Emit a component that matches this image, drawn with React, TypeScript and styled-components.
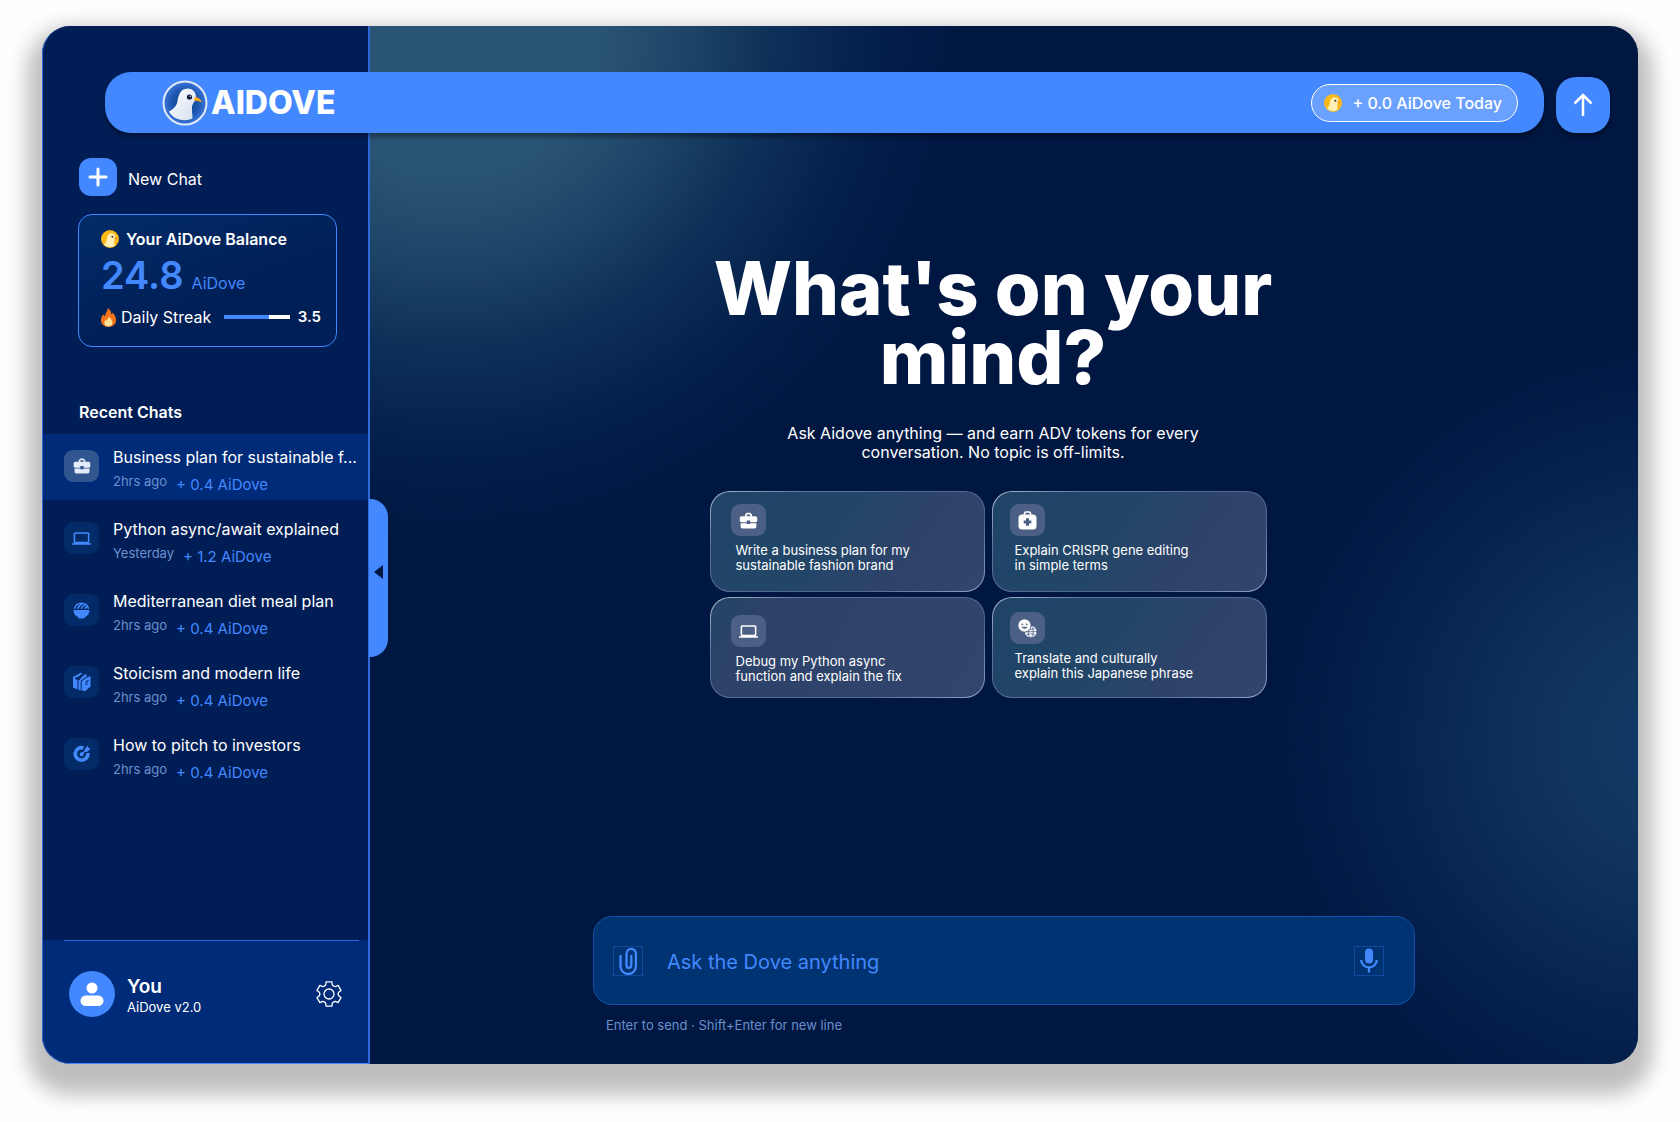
import React from "react";
import styled, { createGlobalStyle, css } from "styled-components";
import { MdBusinessCenter, MdComputer } from "react-icons/md";

const blue = "#4388ff";

const GlobalStyle = createGlobalStyle`
  *, *::before, *::after { box-sizing: border-box; }
  body {
    margin: 0;
    background: #fefefe;
    color: #fff;
    font-family: Inter, "Liberation Sans", sans-serif;
    font-size: 16px;
  }
  h1, h2, p, ul { margin: 0; padding: 0; }
  ul { list-style: none; }
  button, input { font: inherit; color: inherit; }
  button { border: 0; padding: 0; background: none; cursor: pointer; text-align: left; }
  svg { display: block; flex: none; }
`;

/* ---------- Shell ---------- */

const Shell = styled.div`
  display: grid;
  grid-template-columns: 328px minmax(0, 1fr);
  grid-template-rows: auto 1fr;
  min-height: calc(100vh - 84px);
  margin: 26px 42px 58px;
  border-radius: 28px;
  background: #001742;
  box-shadow: 0 16px 20px 15px rgba(0, 0, 0, 0.25);
`;

const TopArea = styled.header`
  grid-area: 1 / 1 / 2 / -1;
  z-index: 2;
  display: flex;
  align-items: flex-end;
  gap: 12px;
  padding: 46px 28px 0 63px;
`;

const TopBar = styled.div`
  flex: 1;
  display: flex;
  align-items: center;
  justify-content: space-between;
  height: 61px;
  padding: 0 26px 0 57px;
  border-radius: 26px;
  background: ${blue};
  box-shadow: 0 4px 4px rgba(0, 0, 0, 0.35);
`;

const Brand = styled.a`
  display: flex;
  align-items: center;
  gap: 3px;
  color: #fff;
  text-decoration: none;
  font-size: 32px;
  font-weight: 800;
  line-height: 44px;
`;

const TodayPill = styled.div`
  display: flex;
  align-items: center;
  gap: 10px;
  height: 38px;
  padding: 0 15px 0 12px;
  border: 1px solid #fff;
  border-radius: 19px;
  background: #6aa1ff;
  font-size: 16px;
  font-weight: 500;
`;

const ScrollTop = styled.button`
  display: grid;
  place-items: center;
  width: 54px;
  height: 56px;
  border-radius: 20px;
  background: ${blue};
  box-shadow: 0 4px 4px rgba(0, 0, 0, 0.35);
`;

/* ---------- Sidebar ---------- */

const Sidebar = styled.aside`
  grid-area: 1 / 1 / -1 / 2;
  position: relative;
  display: flex;
  flex-direction: column;
  padding-top: 132px;
  border: solid ${blue};
  border-width: 0 2px 1px 1px;
  border-color: transparent #2f68d8 ${blue} #2f68d8;
  border-radius: 28px 0 0 28px;
  background: #001e55;
`;

const NewChat = styled.button`
  display: flex;
  align-items: center;
  gap: 11px;
  margin: 0 36px 18px;
  font-size: 16px;
`;

const PlusTile = styled.span`
  display: grid;
  place-items: center;
  width: 38px;
  height: 38px;
  border-radius: 12px;
  background: ${blue};
`;

const NewChatLabel = styled.span`
  padding-top: 3px;
`;

const Balance = styled.section`
  display: flex;
  flex-direction: column;
  height: 133px;
  margin: 0 31px 0 35px;
  padding: 13px 15px 0 22px;
  border: 1px solid ${blue};
  border-radius: 14px;
  background: linear-gradient(160deg, #032c68 0%, #03296200 60%), #001f56;
`;

const BalanceTitle = styled.h2`
  display: flex;
  align-items: center;
  gap: 7px;
  font-size: 16px;
  font-weight: 600;
  line-height: 22px;
`;

const Amount = styled.p`
  display: flex;
  align-items: baseline;
  gap: 8px;
  height: 52px;
  color: ${blue};
  font-size: 16px;
  line-height: 50px;

  strong {
    font-size: 38px;
    font-weight: 600;
  }
`;

const Streak = styled.div`
  display: flex;
  align-items: center;
  gap: 5px;
  font-size: 16px;
  line-height: 30px;

  strong { font-size: 15px; font-weight: 600; }
`;

const Track = styled.span`
  flex: 1;
  height: 4px;
  margin: 0 3px 0 8px;
  background: #fff;
`;

const Fill = styled.span`
  display: block;
  height: 100%;
  background: ${blue};
`;

const ListTitle = styled.h2`
  margin: 54px 36px 11px;
  font-size: 16px;
  font-weight: 600;
  line-height: 22px;
`;

const ChatList = styled.ul`
  display: flex;
  flex-direction: column;
  gap: 6px;
`;

const ChatRow = styled.button<{ $active?: boolean }>`
  display: flex;
  gap: 14px;
  width: 100%;
  height: 66px;
  padding: 12px 4px 0 21px;
  background: ${(p) => (p.$active ? "#002b78" : "transparent")};
`;

const Tile = styled.span<{ $tone?: "muted" | "active" | "glass" }>`
  display: grid;
  place-items: center;
  flex: none;
  width: 35px;
  height: 32px;
  border-radius: 9px;
  background: #032b68;
  color: ${blue};
  ${(p) => p.$tone === "active" && css`background: #31558e; color: #e4ecfb;`}
  ${(p) => p.$tone === "glass" && css`background: #4c5f85; color: #fff;`}
`;

const RowTile = styled(Tile)`
  margin-top: 4px;
`;

const ChatText = styled.span`
  display: block;
  min-width: 0;
`;

const ChatTitle = styled.span`
  display: block;
  font-size: 16px;
  line-height: 22px;
  white-space: nowrap;
`;

const ChatMeta = styled.span`
  display: flex;
  gap: 9px;
  padding-top: 4px;
  color: #6c8fd0;
  font-size: 13px;
  line-height: 18px;
`;

const Earned = styled.span`
  padding-top: 2px;
  color: ${blue};
  font-size: 15px;
  line-height: 22px;
`;

const Account = styled.footer`
  display: flex;
  align-items: center;
  gap: 12px;
  height: 123px;
  margin-top: auto;
  padding: 0 26px 15px 26px;
  border-radius: 0 0 0 27px;
  background:
    linear-gradient(#2f68d8, #2f68d8) 21px 0 / calc(100% - 30px) 1px no-repeat,
    #002b78;
`;

const Avatar = styled.span`
  display: grid;
  place-items: center;
  width: 46px;
  height: 46px;
  border-radius: 50%;
  background: ${blue};
`;

const AccountName = styled.p`
  flex: 1;
  padding-top: 4px;
  font-size: 13px;
  line-height: 18px;

  strong {
    display: block;
    font-size: 19px;
    font-weight: 600;
    line-height: 22px;
  }
`;

const CollapseHandle = styled.button`
  position: absolute;
  top: 473px;
  right: -20px;
  display: grid;
  place-items: center;
  width: 19px;
  height: 158px;
  padding-bottom: 12px;
  border-radius: 0 18px 18px 0;
  background: ${blue};
`;

/* ---------- Main ---------- */

const Main = styled.main`
  grid-area: 1 / 2 / -1 / -1;
  display: flex;
  flex-direction: column;
  align-items: center;
  padding: 228px 24px 30px;
  border-radius: 0 28px 28px 0;
  background:
    radial-gradient(circle 520px at 80px 0, #2b5575 0%, #2a5474 28%, #1f4668 44%, #0e3058 62%, #04204b 80%, #00174200 100%),
    radial-gradient(circle 410px at 103% 69%, #133b68 0%, #10345f 30%, #06244f 66%, #00174200 100%);
`;

const Hero = styled.section`
  display: flex;
  flex-direction: column;
  align-items: center;
  padding-right: 22px;
  text-align: center;
`;

const Headline = styled.h1`
  max-width: 620px;
  font-size: 74px;
  font-weight: 800;
  line-height: 69px;
`;

const Lead = styled.p`
  max-width: 440px;
  margin-top: 32px;
  font-size: 16px;
  line-height: 19px;
`;

const Suggestions = styled.div`
  display: grid;
  grid-template-columns: repeat(2, 275px);
  gap: 5px 7px;
  margin: 29px 10px 40px 0;
`;

const SuggestionCard = styled.button<{ $top: number; $left: number; $plain?: boolean }>`
  display: flex;
  flex-direction: column;
  gap: 7px;
  height: 101px;
  padding: ${(p) => p.$top}px 20px 0 ${(p) => p.$left}px;
  border: 1px solid transparent;
  border-radius: 20px;
  background:
    ${(p) =>
      p.$plain
        ? "linear-gradient(120deg, #234468 0%, #2d4268 18%, #32466d 100%)"
        : "linear-gradient(125deg, #1f4467 0%, #234668 45%, #2e436a 68%, #32466d 100%)"} padding-box,
    linear-gradient(150deg, #aebbd2 0%, #5b6f96 22%, #50658f 72%, #93a3c3 100%) border-box;
  font-size: 13px;
  line-height: 15px;
`;

const CardText = styled.span`
  max-width: 200px;
  padding-left: 5px;
`;

const Composer = styled.form`
  width: 100%;
  max-width: 822px;
  margin-top: auto;
`;

const PromptBox = styled.div`
  display: flex;
  align-items: center;
  gap: 24px;
  height: 89px;
  padding: 0 30px 0 19px;
  border: 1px solid #1450aa;
  border-radius: 19px;
  background: #003371;
`;

const ToolButton = styled.button`
  display: grid;
  place-items: center;
  flex: none;
  width: 30px;
  height: 30px;
  border: 1px solid #12499d;
  color: ${blue};
`;

const PromptInput = styled.input`
  flex: 1;
  min-width: 0;
  padding: 2px 0 0;
  border: 0;
  outline: 0;
  background: none;
  font-size: 20px;
  line-height: 28px;

  &::placeholder { color: ${blue}; opacity: 1; }
`;

const Hint = styled.p`
  margin: 11px 0 0 13px;
  color: #6c8fcb;
  font-size: 13px;
  line-height: 18px;
`;

/* ---------- Drawings ---------- */

const DoveLogo = () => (
  <svg width="46" height="46" viewBox="0 0 46 46" aria-hidden="true">
    <defs>
      <radialGradient id="dove-sky" cx="50%" cy="50%" r="50%">
        <stop offset="0" stopColor="#0d4390" />
        <stop offset="0.6" stopColor="#1c55ab" />
        <stop offset="1" stopColor="#3a75dc" />
      </radialGradient>
      <linearGradient id="dove-body" x1="0" y1="0" x2="1" y2="1">
        <stop offset="0" stopColor="#ffffff" />
        <stop offset="1" stopColor="#d3dfef" />
      </linearGradient>
    </defs>
    <circle cx="23" cy="23" r="21.5" fill="url(#dove-sky)" stroke="#e3e9f5" strokeWidth="2" />
    <path
      d="M7 31.500c2.500-1.500 6.500-4 8-8C16.200 18 17 8.500 25.500 8.500c5 0 8.200 3.200 8.500 8 .2 4-3.500 6.500-4 10.500-.4 4 .6 8 .5 11.500-5 2.300-11 2.200-16 0C11 37 8.500 34.500 7 31.500z"
      fill="url(#dove-body)"
    />
    <path d="M32.800 16.500c3 .5 5.700 2.500 7.200 5.700-2.700-1-5-1.300-7.800-1.200z" fill="#f5a31a" />
    <circle cx="27.500" cy="17" r="2.600" fill="#0b1a3c" />
    <circle cx="28.300" cy="16.200" r="0.700" fill="#fff" />
  </svg>
);

const ChickCoin = () => (
  <svg width="18" height="18" viewBox="0 0 18 18" aria-hidden="true">
    <circle cx="9" cy="9" r="9" fill="#fbb917" />
    <path d="M3 14.500C5 12.800 5.700 11 6 8c.3-2.700 2-4.800 4.600-4.800 2.500 0 4 1.700 3.800 3.900-.1 2-1.300 3.200-1.100 5.400.1 1.200.3 2.200.2 3.200A8.300 8.300 0 0 1 3 14.500z" fill="#fff0b8" />
    <path d="M13.800 7.300c1.200.2 2 .8 2.400 1.900l-2.600-.3z" fill="#ee7d11" />
    <circle cx="11.400" cy="6.700" r="1" fill="#3d2b12" />
  </svg>
);

const Flame = () => (
  <svg width="15" height="19" viewBox="0 0 15 19" aria-hidden="true">
    <path d="M6.500 0c2.600 1.400 4 3.600 3.700 6.300.8-.4 1.200-1 1.300-1.900C13.700 6.500 15 9 15 11.800 15 16 12 19 7.500 19S0 16 0 12c0-2.500 1-4.300 2.400-5.700.1 1 .5 1.700 1.300 2.100C4 5 7 3.500 6.500 0z" fill="#f5761a" />
    <path d="M7.800 8c.3 2 3.700 3.200 3.700 6.600 0 2.300-1.500 3.900-4 3.900s-4.100-1.500-4.100-3.700c0-1.500.7-2.500 1.500-3.300.2.800.6 1.200 1.200 1.400C6.100 11 7.900 10 7.800 8z" fill="#ffe49a" />
  </svg>
);

const PlusGlyph = () => (
  <svg width="20" height="20" viewBox="0 0 20 20" fill="none" stroke="#fff" strokeWidth="3" strokeLinecap="round" aria-hidden="true">
    <path d="M10 2v16M2 10h16" />
  </svg>
);

const ArrowUp = () => (
  <svg width="20" height="24" viewBox="0 0 20 24" fill="none" stroke="#fff" strokeWidth="2.500" aria-hidden="true">
    <path d="M10 23V2.500M1.500 10.500L10 2l8.500 8.500" />
  </svg>
);

const Paperclip = () => (
  <svg width="28" height="28" viewBox="0 0 28 28" fill="none" stroke="currentColor" strokeWidth="2.300" strokeLinecap="round" aria-hidden="true">
    <path d="M6.500 9v10.300a7.700 7.700 0 0 0 15.400 0V6.800a4.700 5 0 0 0-9.400 0v11.700a2.400 2.400 0 0 0 4.800 0V9" />
  </svg>
);

const Mic = () => (
  <svg width="28" height="28" viewBox="0 0 28 28" fill="none" stroke="currentColor" strokeWidth="2.300" aria-hidden="true">
    <rect x="10" y="1.500" width="8" height="15" rx="4" fill="currentColor" stroke="none" />
    <path d="M6.200 13a7.800 7.400 0 0 0 15.600 0M14 20.400V25.500" />
  </svg>
);

const Bowl = () => (
  <svg width="17" height="17" viewBox="0 0 17 17" aria-hidden="true">
    <path d="M.5 8h16c0 3.500-2 6-4.700 7.300-.2.700-.5 1.200-1.300 1.200h-4c-.8 0-1.100-.5-1.300-1.200C2.500 14 .5 11.500.5 8z" fill="currentColor" />
    <path
      d="M1.500 6.800C2.300 3.500 5 1.200 8.500 1.200M4.600 6.800C5.200 4.800 7 3 9.800 1.400M8.200 6.800c.5-1.700 2-3.200 4.600-4.200M11.800 6.800c.4-1 1.200-1.900 2.600-2.400M8.500 1.200c3.500 0 6.200 2.300 7 5.600"
      fill="none"
      stroke="currentColor"
      strokeWidth="1.500"
    />
  </svg>
);

const FirstAid = () => (
  <svg width="19" height="19" viewBox="0 0 19 19" aria-hidden="true">
    <rect x="0.500" y="3.500" width="18" height="15" rx="3.500" fill="currentColor" />
    <path d="M6.500 4V2.500A1.500 1.500 0 0 1 8 1h3a1.500 1.500 0 0 1 1.500 1.500V4" fill="none" stroke="currentColor" strokeWidth="1.600" />
    <path d="M9.500 7.200v7.600M5.700 11h7.600" stroke="#4c5f85" strokeWidth="3" />
  </svg>
);

const Books = () => (
  <svg width="18" height="20" viewBox="0 0 18 20" fill="currentColor" aria-hidden="true">
    <path d="M1.500 6.200 8 2.600 5.500 2 0 5v10.500l4.500 2V8.200z" />
    <path d="M5.500 8.500v9.300l2.200 1V8.700L14 4.300l-2-.9z" />
    <path d="M8.700 9.300 14 5.600l3.500-1.700v10.700L12 19.200l-3.300-1z" />
    <path d="M3.300 4.200 7.200.8l2.300.5-5.200 4zM7.500 6.500 12 2.200l2.300.6-5.500 4.700z" />
    <path d="M12.500 10.500l3-1.900M12.500 12.700l2-1.300" stroke="#032b68" strokeWidth="1.200" />
  </svg>
);

const Goal = () => (
  <svg width="18" height="18" viewBox="0 0 18 18" fill="none" aria-hidden="true">
    <path d="M10.500 2.900A6.300 6.300 0 1 0 14.800 8" stroke="currentColor" strokeWidth="3.600" />
    <circle cx="8.600" cy="9.300" r="2" fill="currentColor" />
    <path d="M8.600 9.300 13 5" stroke="currentColor" strokeWidth="1.500" />
    <path d="M11.800 4.200 14.800.6l.6 2.400 2.400.7-3.500 3-2.500.1z" fill="currentColor" />
  </svg>
);

const SmileGlobe = () => (
  <svg width="19" height="19" viewBox="0 0 19 19" fill="none" aria-hidden="true">
    <circle cx="12.700" cy="12.700" r="5.900" fill="#fff" />
    <path d="M7 12.700h12M8.500 9.500c2.500 1.500 6 1.500 8.400 0M8.500 15.900c2.500-1.500 6-1.500 8.400 0" stroke="#4c5f85" strokeWidth="0.800" />
    <ellipse cx="12.700" cy="12.700" rx="2.600" ry="5.900" stroke="#4c5f85" strokeWidth="0.800" />
    <circle cx="6.500" cy="6.500" r="6.600" fill="#fff" stroke="#4c5f85" strokeWidth="0.900" />
    <circle cx="4.300" cy="5.300" r="0.900" fill="#4c5f85" />
    <circle cx="8.700" cy="5.300" r="0.900" fill="#4c5f85" />
    <path d="M3.500 7.800c1.500 2.600 4.500 2.600 6 0z" fill="#4c5f85" />
  </svg>
);

const Person = () => (
  <svg width="24" height="24" viewBox="0 0 24 24" fill="#fff" aria-hidden="true">
    <circle cx="12" cy="6" r="5.500" />
    <rect x="0.500" y="13.500" width="23" height="10.500" rx="5.250" />
  </svg>
);

const gearPath = (() => {
  const tooth = [[-4.400, -8], [-3.300, -9.200], [-2.900, -12.200], [2.900, -12.200], [3.300, -9.200], [4.400, -8]];
  const points: string[] = [];
  for (let i = 0; i < 6; i++) {
    const a = (i * Math.PI) / 3;
    tooth.forEach(([x, y]) => {
      const px = 13 + x * Math.cos(a) - y * Math.sin(a);
      const py = 13 + x * Math.sin(a) + y * Math.cos(a);
      points.push(`${px.toFixed(2)} ${py.toFixed(2)}`);
    });
  }
  return `M${points.join("L")}Z`;
})();

const Gear = () => (
  <svg width="26" height="26" viewBox="0 0 26 26" fill="none" stroke="#fff" strokeWidth="1.300" strokeLinejoin="round" aria-hidden="true">
    <path d={gearPath} />
    <circle cx="13" cy="13" r="5" />
  </svg>
);

const HandleArrow = () => (
  <svg width="9" height="14" viewBox="0 0 9 14" aria-hidden="true">
    <path d="M9 0v14L0 7z" fill="#001742" />
  </svg>
);

/* ---------- Data ---------- */

const chats = [
  { title: "Business plan for sustainable f...", time: "2hrs ago", earned: "+ 0.4 AiDove", icon: <MdBusinessCenter size={20} />, active: true },
  { title: "Python async/await explained", time: "Yesterday", earned: "+ 1.2 AiDove", icon: <MdComputer size={19} /> },
  { title: "Mediterranean diet meal plan", time: "2hrs ago", earned: "+ 0.4 AiDove", icon: <Bowl /> },
  { title: "Stoicism and modern life", time: "2hrs ago", earned: "+ 0.4 AiDove", icon: <Books /> },
  { title: "How to pitch to investors", time: "2hrs ago", earned: "+ 0.4 AiDove", icon: <Goal /> },
];

const suggestions = [
  { lines: ["Write a business plan for my", "sustainable fashion brand"], icon: <MdBusinessCenter size={21} />, top: 12, left: 20 },
  { lines: ["Explain CRISPR gene editing", "in simple terms"], icon: <FirstAid />, top: 12, left: 17 },
  { lines: ["Debug my Python async", "function and explain the fix"], icon: <MdComputer size={19} />, top: 17, left: 20, plain: true },
  { lines: ["Translate and culturally", "explain this Japanese phrase"], icon: <SmileGlobe />, top: 14, left: 17 },
];

const streakProgress = 0.68;

export default function App() {
  return (
    <>
      <GlobalStyle />
      <Shell>
        <TopArea>
          <TopBar>
            <Brand href="#">
              <DoveLogo />
              AIDOVE
            </Brand>
            <TodayPill>
              <ChickCoin />
              + 0.0 AiDove Today
            </TodayPill>
          </TopBar>
          <ScrollTop type="button" aria-label="Scroll to top">
            <ArrowUp />
          </ScrollTop>
        </TopArea>

        <Sidebar>
          <NewChat type="button">
            <PlusTile><PlusGlyph /></PlusTile>
            <NewChatLabel>New Chat</NewChatLabel>
          </NewChat>

          <Balance>
            <BalanceTitle><ChickCoin />Your AiDove Balance</BalanceTitle>
            <Amount><strong>24.8</strong>AiDove</Amount>
            <Streak>
              <Flame />
              Daily Streak
              <Track><Fill style={{ width: `${streakProgress * 100}%` }} /></Track>
              <strong>3.5</strong>
            </Streak>
          </Balance>

          <ListTitle>Recent Chats</ListTitle>
          <ChatList>
            {chats.map((chat) => (
              <li key={chat.title}>
                <ChatRow type="button" $active={chat.active}>
                  <RowTile $tone={chat.active ? "active" : "muted"}>{chat.icon}</RowTile>
                  <ChatText>
                    <ChatTitle>{chat.title}</ChatTitle>
                    <ChatMeta>
                      {chat.time}
                      <Earned>{chat.earned}</Earned>
                    </ChatMeta>
                  </ChatText>
                </ChatRow>
              </li>
            ))}
          </ChatList>

          <Account>
            <Avatar><Person /></Avatar>
            <AccountName><strong>You</strong>AiDove v2.0</AccountName>
            <button type="button" aria-label="Settings"><Gear /></button>
          </Account>

          <CollapseHandle type="button" aria-label="Collapse sidebar">
            <HandleArrow />
          </CollapseHandle>
        </Sidebar>

        <Main>
          <Hero>
            <Headline>What's on your mind?</Headline>
            <Lead>Ask Aidove anything — and earn ADV tokens for every conversation. No topic is off-limits.</Lead>
            <Suggestions>
              {suggestions.map((s) => (
                <SuggestionCard key={s.lines[0]} type="button" $top={s.top} $left={s.left} $plain={s.plain}>
                  <Tile $tone="glass">{s.icon}</Tile>
                  <CardText>{s.lines[0]}<br />{s.lines[1]}</CardText>
                </SuggestionCard>
              ))}
            </Suggestions>
          </Hero>

          <Composer onSubmit={(e: React.FormEvent) => e.preventDefault()}>
            <PromptBox>
              <ToolButton type="button" aria-label="Attach a file"><Paperclip /></ToolButton>
              <PromptInput type="text" aria-label="Message" placeholder="Ask the Dove anything" />
              <ToolButton type="button" aria-label="Speak"><Mic /></ToolButton>
            </PromptBox>
            <Hint>Enter to send · Shift+Enter for new line</Hint>
          </Composer>
        </Main>
      </Shell>
    </>
  );
}
